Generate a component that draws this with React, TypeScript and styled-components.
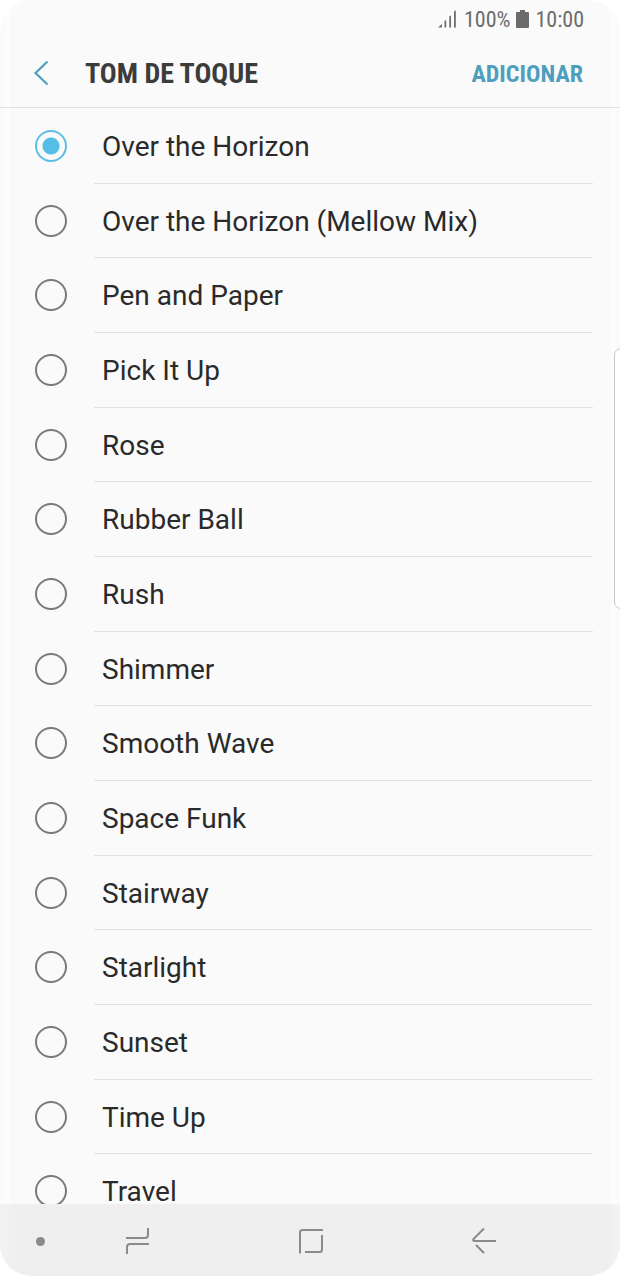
import React, { useState } from "react";
import styled, { createGlobalStyle } from "styled-components";

const GlobalStyle = createGlobalStyle`
  * { box-sizing: border-box; }
  body { margin: 0; background: #ffffff; }
  button { border: 0; padding: 0; background: none; cursor: pointer; }
  svg { display: block; }
`;

const Screen = styled.div`
  position: relative;
  display: flex;
  flex-direction: column;
  height: 100vh;
  overflow: hidden;
  border-radius: 32px;
  background: linear-gradient(to right, #fbfbfb 5px, #fefefe 8px, #fafafa 11px, #fafafa calc(100% - 11px), #fdfdfd calc(100% - 7px), #fbfbfb calc(100% - 4px));
  font-family: Roboto, "Liberation Sans", sans-serif;
  color: #2a2a2a;
`;

const StatusBar = styled.div`
  flex: none;
  display: flex;
  align-items: center;
  justify-content: flex-end;
  gap: 6px;
  height: 40px;
  padding-right: 36px;
  font-family: "Roboto Condensed", Roboto, sans-serif;
  font-size: 22px;
  line-height: 24px;
  color: #6b6b6b;
`;

const Header = styled.header`
  flex: none;
  display: flex;
  align-items: center;
  height: 68px;
  padding: 0 37px 0 33px;
  border-bottom: 1px solid #e2e2e2;
  font-family: "Roboto Condensed", Roboto, sans-serif;
`;

const BackButton = styled.button`
  width: 52px;
  height: 44px;
`;

const Title = styled.h1`
  flex: 1;
  margin: 0;
  font-size: 28px;
  line-height: 32px;
  font-weight: 700;
  color: #3c3c3c;
`;

const AddButton = styled.button`
  font-family: inherit;
  font-size: 24px;
  line-height: 32px;
  font-weight: 700;
  color: #4e9fbd;
`;

const ToneList = styled.div`
  flex: 1;
  min-height: 0;
  display: grid;
  grid-template-rows: repeat(14, minmax(0, 3fr)) minmax(0, 2fr);
  padding-top: 1px;
`;

const ToneRow = styled.label`
  display: flex;
  align-items: flex-start;
  min-height: 0;
  overflow: hidden;
  padding: 0 27px 0 35px;
  cursor: pointer;
`;

const Radio = styled.input`
  appearance: none;
  flex: none;
  width: 32px;
  height: 32px;
  margin: 21px 27px 0 0;
  border: 2px solid #7a7a7a;
  border-radius: 50%;

  &:checked {
    border-color: #5bbfe4;
    background: radial-gradient(circle, #55bee6 8px, transparent 9px);
  }
`;

const ToneName = styled.span`
  flex: 1;
  align-self: stretch;
  padding: 22px 8px 0;
  border-bottom: 1px solid #e2e2e2;
  font-size: 28px;
  line-height: 32px;

  ${ToneRow}:last-child & { border-bottom: 0; }
`;

const NavBar = styled.nav`
  flex: none;
  display: grid;
  grid-template-columns: 51px 1fr 1fr 1fr 49px;
  align-items: center;
  height: 72px;
  background: linear-gradient(to right, #f2f2f2 6px, #efefef 11px, #efefef calc(100% - 11px), #f2f2f2 calc(100% - 6px));
`;

const NavButton = styled.button`
  display: flex;
  align-items: center;
  justify-content: center;
  height: 48px;
  margin-top: 2px;
`;

const DotButton = styled(NavButton)`
  justify-content: flex-end;
  padding-right: 6px;
`;

const EdgeHandle = styled.div`
  position: absolute;
  top: 348px;
  right: -8px;
  width: 14px;
  height: 261px;
  border: 1px solid #c9c9c9;
  border-radius: 7px;
  background: #ffffff;
`;

const tones = [
  "Over the Horizon",
  "Over the Horizon (Mellow Mix)",
  "Pen and Paper",
  "Pick It Up",
  "Rose",
  "Rubber Ball",
  "Rush",
  "Shimmer",
  "Smooth Wave",
  "Space Funk",
  "Stairway",
  "Starlight",
  "Sunset",
  "Time Up",
  "Travel",
];

function SignalIcon() {
  return (
    <svg width="20" height="20" viewBox="0 0 20 20" fill="#6b6b6b" aria-hidden="true">
      <path d="M0 17.500 4 14V17.500zM6.500 11 8.200 10v7.500H6.500zM11.300 6.500 13 5.500v12h-1.700zM16 1.500l1.800-1.200v17.200H16z" />
    </svg>
  );
}

function BatteryIcon() {
  return (
    <svg width="13" height="20" viewBox="0 0 13 20" fill="#6b6b6b" aria-hidden="true">
      <path d="M4 0h5v2h3q1 0 1 1v14q0 1-1 1H1q-1 0-1-1V3q0-1 1-1h3z" />
    </svg>
  );
}

export default function App() {
  const [selected, setSelected] = useState(tones[0]);

  return (
    <>
      <GlobalStyle />
      <Screen>
        <StatusBar>
          <SignalIcon />
          <span>100%</span>
          <BatteryIcon />
          <span>10:00</span>
        </StatusBar>
        <Header>
          <BackButton aria-label="Voltar">
            <svg width="18" height="44" viewBox="0 0 18 44" fill="none" stroke="#4e9fbd" strokeWidth="2.2">
              <path d="M14.500 9.500 2.500 21l12 11.500" />
            </svg>
          </BackButton>
          <Title>TOM DE TOQUE</Title>
          <AddButton>ADICIONAR</AddButton>
        </Header>
        <ToneList role="radiogroup" aria-label="Tom de toque">
          {tones.map((tone) => (
            <ToneRow key={tone}>
              <Radio
                type="radio"
                name="tone"
                value={tone}
                checked={selected === tone}
                onChange={() => setSelected(tone)}
              />
              <ToneName>{tone}</ToneName>
            </ToneRow>
          ))}
        </ToneList>
        <NavBar>
          <DotButton aria-label="Ocultar barra">
            <svg width="9" height="9" viewBox="0 0 9 9" fill="#8a8a8a">
              <circle cx="4.500" cy="4.500" r="4.500" />
            </svg>
          </DotButton>
          <NavButton aria-label="Recentes">
            <svg width="24" height="28" viewBox="0 0 24 28" fill="none" stroke="#8a8a8a" strokeWidth="2">
              <path d="M0 11h19q3 0 3-3V1M23 17H4q-3 0-3 3v7" />
            </svg>
          </NavButton>
          <NavButton aria-label="Início">
            <svg width="26" height="26" viewBox="0 0 26 26" fill="none" stroke="#8a8a8a" strokeWidth="2">
              <path d="M2 25.500V4.500Q2 2 4.500 2H25M24 7v14.500q0 2.500-2.500 2.500H7" />
            </svg>
          </NavButton>
          <NavButton aria-label="Voltar à tela anterior">
            <svg width="24" height="26" viewBox="0 0 24 26" fill="none" stroke="#8a8a8a" strokeWidth="2" strokeLinejoin="round">
              <path d="M12 .5 1.500 11Q.5 13 2.500 13H24M4 17 12 25" />
            </svg>
          </NavButton>
        </NavBar>
        <EdgeHandle />
      </Screen>
    </>
  );
}
